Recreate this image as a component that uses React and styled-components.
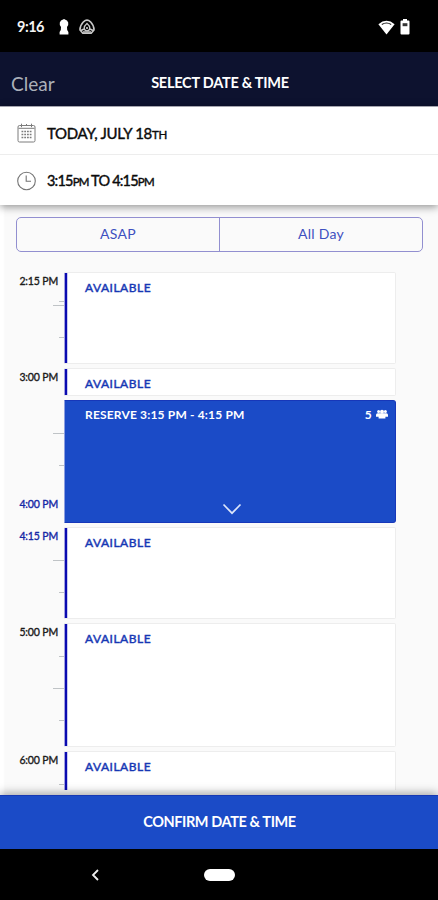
import React from 'react';
import styled, { createGlobalStyle } from 'styled-components';

const QUARTER = 31.93;

const GlobalStyle = createGlobalStyle`
    * {
        box-sizing: border-box;
    }

    body {
        margin: 0;
        background: #000;
        font-family: Lato, 'Liberation Sans', sans-serif;
    }
`;

const Screen = styled.div`
    display: flex;
    flex-direction: column;
    width: 438px;
    height: 900px;
    overflow: hidden;
    background: linear-gradient(90deg, #fff 3px, #fafafa 5px);
`;

const StatusBar = styled.div`
    display: flex;
    align-items: center;
    flex: 0 0 52px;
    padding: 2px 28px 0 17px;
    background: #000;
    color: #f4f4f4;
`;

const Clock = styled.span`
    width: 42px;
    padding-bottom: 2px;
    font-size: 14.5px;
    font-weight: 700;
    letter-spacing: -0.5px;
`;

const StatusIcons = styled.div`
    display: flex;
    align-items: center;
    gap: ${(props) => props.$gap}px;
    margin-left: ${(props) => (props.$end ? 'auto' : '0')};
`;

const Header = styled.header`
    display: grid;
    grid-template-columns: 91px 1fr 90px;
    align-items: center;
    flex: 0 0 54px;
    padding: 8px 0 0 11px;
    background: #0d122f;
`;

const ClearButton = styled.button`
    padding: 1px 0 0;
    border: 0;
    background: none;
    color: #abb0b9;
    font: 400 19px Lato, sans-serif;
    letter-spacing: 0;
    text-align: left;
`;

const Title = styled.h1`
    margin: 0 10px 1px 0;
    color: #fff;
    font-size: 14.5px;
    font-weight: 700;
    letter-spacing: -0.25px;
    text-align: center;
    white-space: nowrap;
`;

const Summary = styled.section`
    position: relative;
    flex: 0 0 99px;
    border-top: 1px solid #a5a5af;
    background: #fff;
    box-shadow: 0 2px 8px rgba(0, 0, 0, 0.42);
`;

const SummaryRow = styled.div`
    display: flex;
    align-items: center;
    gap: 11px;
    height: ${(props) => props.$height}px;
    padding: 5px 0 0 17px;
    border-bottom: ${(props) => (props.$divided ? '1px solid #ededed' : '0')};
    color: #0b0b0b;
    font-size: ${(props) => props.$size}px;
    font-weight: 400;
    letter-spacing: ${(props) => props.$spacing}px;
    -webkit-text-stroke: 0.4px currentColor;

    small {
        font-size: 11.5px;
    }
`;

const Segmented = styled.div`
    display: grid;
    grid-template-columns: 202px 1fr;
    flex: 0 0 35px;
    margin: 12px 15px 20px 16px;
    border: 1px solid #928fd0;
    border-radius: 5px;
`;

const Segment = styled.button`
    padding: 0 0 2px;
    border: 0;
    border-left: ${(props) => (props.$divided ? '1px solid #928fd0' : '0')};
    background: none;
    color: #3e50c0;
    font: 400 14px Lato, sans-serif;
    letter-spacing: 0.3px;
`;

const Schedule = styled.main`
    flex: 0 0 518px;
    overflow: hidden;
`;

const SlotRow = styled.div`
    display: grid;
    grid-template-columns: 64px 332px;
    grid-template-rows: 100%;
    height: ${(props) => props.$quarters * QUARTER}px;
`;

const Gutter = styled.div`
    display: flex;
    flex-direction: column;
`;

const Quarter = styled.div`
    display: flex;
    flex-direction: column;
    align-items: flex-end;
    justify-content: space-between;
    height: ${QUARTER}px;
    padding-bottom: 2px;
`;

const TimeLabel = styled.span`
    padding: 3px 6px 0 0;
    color: ${(props) => (props.$selected ? '#1527a5' : '#1b1b1b')};
    font-size: 10.5px;
    font-weight: 400;
    line-height: 13px;
    letter-spacing: -0.15px;
    -webkit-text-stroke: 0.35px currentColor;
`;

const Tick = styled.i`
    width: ${(props) => (props.$long ? 11 : 5)}px;
    height: 1px;
    margin: 1px 0 0;
    background: #bfc3c6;
`;

const Card = styled.div`
    display: flex;
    flex-direction: column;
    justify-content: space-between;
    margin-bottom: 4px;
    padding: 7px 7px 3px 21px;
    border: 1px solid #ededed;
    border-left: 0;
    border-radius: 0 2px 2px 0;
    background: linear-gradient(90deg, #a3a1e0 1px, #0a0ab0 1px 3px, #c9c9ef 3px 4px, #fff 4px) border-box;
    color: #1637b4;
`;

const ReservedCard = styled(Card)`
    padding: 6px 7px 7px 20px;
    border-color: #1737b9;
    border-left: 1px solid #8d9fe0;
    border-radius: 0 3px 3px 0;
    background: #1b4bc7;
    color: #fff;
`;

const CardHeading = styled.div`
    display: flex;
    align-items: center;
    justify-content: space-between;
    height: 15px;
    font-size: 12px;
    font-weight: ${(props) => (props.$bold ? 700 : 400)};
    letter-spacing: ${(props) => (props.$bold ? 0.17 : 0.5)}px;
    -webkit-text-stroke: ${(props) => (props.$bold ? 0 : 0.45)}px currentColor;
`;

const Party = styled.span`
    display: flex;
    align-items: center;
    gap: 4px;
`;

const Expand = styled.svg`
    align-self: center;
    margin-left: -10px;
`;

const ConfirmButton = styled.button`
    position: relative;
    flex: 0 0 54px;
    margin-top: 5px;
    padding: 0 0 2px;
    border: 0;
    border-top: 1px solid #1739b4;
    background: #1b4bc7;
    box-shadow: 0 -2px 9px rgba(0, 0, 0, 0.34);
    color: #fff;
    font: 700 14.5px Lato, sans-serif;
    letter-spacing: -0.4px;
    text-indent: 1px;
`;

const NavBar = styled.nav`
    display: grid;
    grid-template-columns: 91px 113px 1fr;
    align-items: center;
    flex: 1;
    background: #000;

    svg {
        grid-column: 2;
    }
`;

const HomePill = styled.span`
    width: 31px;
    height: 12px;
    border-radius: 6px;
    background: #fff;
`;

const KeyholeIcon = () => (
    <svg width="10" height="16" viewBox="0 0 10 16" fill="#fff">
        <path d="M5 0 8 1.4 9.2 3.6V6L8 8 8.2 11 9.4 13v2.6H.6V13L1.8 11 2 8 .8 6V3.6L2 1.4z" />
    </svg>
);

const BadgeIcon = () => (
    <svg width="16" height="16" viewBox="0 0 16 16" fill="none" stroke="#c8c8c8" strokeWidth="1.6">
        <path d="M4.5 2.8Q8-.4 11.5 2.8Q15.1 6.6 15 11L12.2 14.2H3.8L1 11Q.9 6.6 4.5 2.8Z" />
        <path d="M8 4.4C6 6 5.2 7.7 5.2 9.1a2.8 2.8 0 0 0 5.6 0C10.8 7.7 10 6 8 4.4Z" strokeWidth="1.3" />
        <path d="M2 11.5 5 10M14 11.5 11 10M4 13h8" />
        <circle cx="8" cy="9" r="1" fill="#ddd" stroke="none" />
    </svg>
);

const WifiIcon = () => (
    <svg width="17" height="15" viewBox="0 0 17 15" fill="#fff">
        <path d="M.4 4.2Q8.5-2.7 16.6 4.2L8.5 14.5Z" />
        <path d="M3.8 4.5Q8.5 1.5 13.2 4.5" fill="none" stroke="#222" strokeWidth="1.1" />
    </svg>
);

const BatteryIcon = () => (
    <svg width="10" height="16" viewBox="0 0 10 16">
        <path d="M3 0h4v1.5h1.5q1 0 1 1v12q0 1-1 1h-7q-1 0-1-1v-12q0-1 1-1H3z" fill="#fff" />
        <path d="M2.6 4.2h4.8v3H2.6z" fill="#333" />
    </svg>
);

const CalendarIcon = () => (
    <svg width="19" height="20" viewBox="0 0 19 20" fill="none" stroke="#7c7c7c">
        <rect x="1" y="2.5" width="17" height="16.5" rx="1.5" />
        <path d="M4.5 .7v3.5M14.5 .7v3.5M9.5 1v2M1.5 5.3h16" />
        <path d="M4.5 8.5h10M4.5 11.5h10M4.5 14.5h10" strokeWidth="1.5" strokeDasharray="1.8 .95" />
    </svg>
);

const ClockIcon = () => (
    <svg width="19" height="20" viewBox="0 0 19 20" fill="none" stroke="#747474" strokeWidth="1.1">
        <circle cx="9.5" cy="10" r="8.8" />
        <path d="M9.2 4.5v5.8h4.8" />
    </svg>
);

const PeopleIcon = () => (
    <svg width="12" height="10" viewBox="0 0 12 10" fill="#fff">
        <circle cx="2.6" cy="2.4" r="1.5" />
        <circle cx="9.4" cy="2.4" r="1.5" />
        <path d="M0 7.8V6q0-1.7 1.7-1.7h8.6Q12 4.3 12 6v1.8z" />
        <circle cx="6" cy="2.7" r="2" />
        <path d="M2.6 9.4V7q0-2 2-2h2.8q2 0 2 2v2.4z" />
    </svg>
);

// each mark is one quarter hour: a time, or a long or short tick
const slots = [
    { marks: ['2:15 PM', 'long', 'short'], now: true },
    { marks: ['3:00 PM'] },
    { marks: ['', 'long', 'short', '4:00 PM'], reserved: true },
    { marks: ['4:15 PM', 'long', 'short'] },
    { marks: ['5:00 PM', 'short', 'long', 'short'] },
    { marks: ['6:00 PM', 'short', 'long', 'short'] },
];

const selectedTimes = ['4:00 PM', '4:15 PM'];

const Mark = ({ mark }) => {
    if (mark === 'long' || mark === 'short') {
        return <Tick $long={mark === 'long'} />;
    }
    return <TimeLabel $selected={selectedTimes.includes(mark)}>{mark}</TimeLabel>;
};

const Slot = ({ marks, reserved, now }) => (
    <SlotRow $quarters={marks.length}>
        <Gutter>
            {marks.map((mark, i) => (
                <Quarter key={i}>
                    <Mark mark={mark} />
                    {now && i === 0 && <Tick />}
                </Quarter>
            ))}
        </Gutter>
        {reserved ? (
            <ReservedCard>
                <CardHeading $bold>
                    <span>RESERVE 3:15 PM - 4:15 PM</span>
                    <Party>
                        5 <PeopleIcon />
                    </Party>
                </CardHeading>
                <Expand width="20" height="12" viewBox="0 0 20 12" fill="none" stroke="#dce5fa" strokeWidth="1.7">
                    <path d="M1.5 1.5 10 10.2 18.5 1.5" />
                </Expand>
            </ReservedCard>
        ) : (
            <Card>
                <CardHeading>AVAILABLE</CardHeading>
            </Card>
        )}
    </SlotRow>
);

const App = () => (
    <>
        <GlobalStyle />
        <Screen>
            <StatusBar>
                <Clock>9:16</Clock>
                <StatusIcons $gap={10}>
                    <KeyholeIcon />
                    <BadgeIcon />
                </StatusIcons>
                <StatusIcons $gap={5} $end>
                    <WifiIcon />
                    <BatteryIcon />
                </StatusIcons>
            </StatusBar>
            <Header>
                <ClearButton>Clear</ClearButton>
                <Title>SELECT DATE &amp; TIME</Title>
            </Header>
            <Summary>
                <SummaryRow $height={48} $size={15} $spacing={-0.3} $divided>
                    <CalendarIcon />
                    <span>
                        TODAY, JULY 18<small>TH</small>
                    </span>
                </SummaryRow>
                <SummaryRow $height={46} $size={14.5} $spacing={-0.8}>
                    <ClockIcon />
                    <span>
                        3:15<small>PM</small> TO 4:15<small>PM</small>
                    </span>
                </SummaryRow>
            </Summary>
            <Segmented>
                <Segment>ASAP</Segment>
                <Segment $divided>All Day</Segment>
            </Segmented>
            <Schedule>
                {slots.map((slot) => (
                    <Slot key={slot.marks.join()} {...slot} />
                ))}
            </Schedule>
            <ConfirmButton>CONFIRM DATE &amp; TIME</ConfirmButton>
            <NavBar>
                <svg width="9" height="12" viewBox="0 0 9 12" fill="none" stroke="#eee" strokeWidth="1.8">
                    <path d="M7 1 2 6l5 5" />
                </svg>
                <HomePill />
            </NavBar>
        </Screen>
    </>
);

export default App;
